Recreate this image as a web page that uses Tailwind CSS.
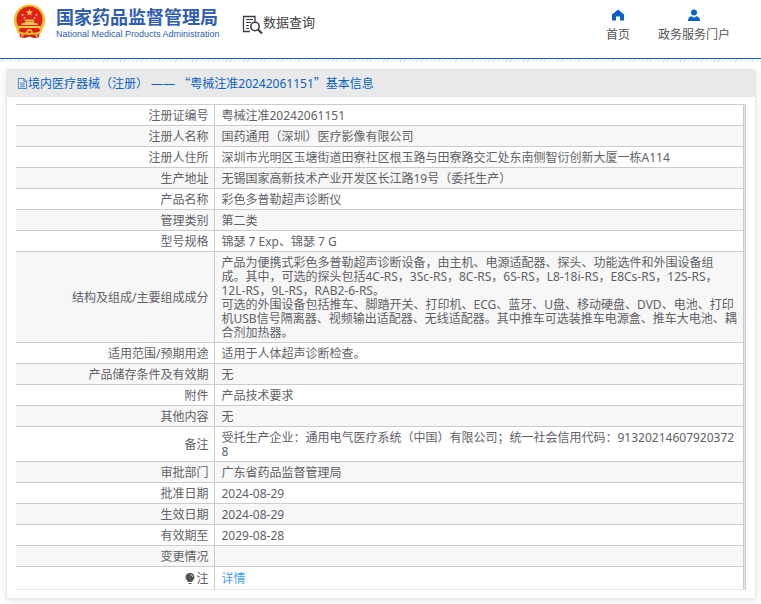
<!DOCTYPE html>
<html lang="zh-CN">
<head>
  <title>国家药品监督管理局 数据查询</title>
  <meta charset="utf-8" />
  <meta name="viewport" content="width=device-width, initial-scale=1" />
  <script src="https://cdn.jsdelivr.net/npm/@tailwindcss/browser@4"></script>
</head>
<body class="bg-white min-h-screen font-['Noto_Sans','Noto_Sans_CJK_SC',sans-serif] text-xs leading-[14px] text-[#606266]">
<header>
  <div class="h-[58px] flex items-start justify-between pl-3 pr-[31px]">
    <div class="flex items-start">
      <a href="#" class="flex items-start gap-[9px] pt-1 text-[#2f5db3]">
        <svg class="w-[35px] h-[35px]" viewBox="0 0 35 35">
          <circle cx="17.5" cy="16" r="15.6" fill="#f0bd2c" />
          <path d="M7 25 L28 25 L27 33 Q22 35 17.5 32.500 Q13 35 8 33 Z" fill="#d42019" />
          <circle cx="17.500" cy="15.500" r="13" fill="#e0201b" />
          <path d="M17.500 5 l1 2.300 2.500 .2 -1.900 1.600 .6 2.400 -2.200 -1.300 -2.200 1.300 .6 -2.400 -1.900 -1.600 2.500 -.2z" fill="#f8c848" />
          <g fill="#f8c848">
            <circle cx="10.500" cy="11" r="1" /><circle cx="12.500" cy="14" r="1" />
            <circle cx="22.500" cy="14" r="1" /><circle cx="24.500" cy="11" r="1" />
            <path d="M12 17 L14 15.500 H21 L23 17 Z" />
            <path d="M13 17.500 H22 V19 H25 L26 21 H9 L10 19 H13 Z" />
            <path d="M6 22 H29 L27.500 24 H7.500 Z" />
          </g>
          <path d="M4 24 Q9 31 17.500 27.500 Q26 31 31 24 L29 29 Q23 32 17.500 30 Q12 32 6 29 Z" fill="#f0bd2c" />
          <circle cx="17.500" cy="28" r="3" fill="#f0bd2c" />
          <circle cx="17.500" cy="28" r="1.300" fill="#d42019" />
          <path d="M9 30 L12 31 L10 34 Z M26 30 L23 31 L25 34 Z" fill="#f0bd2c" />
        </svg>
        <span class="block w-[162px] pt-1">
          <span class="block text-lg leading-[18px] font-bold">国家药品监督管理局</span>
          <span class="block mt-[2px] text-[9px] leading-[12px] font-['Liberation_Sans',sans-serif] whitespace-nowrap">National Medical Products Administration</span>
        </span>
      </a>
      <a href="#" class="flex items-center ml-6 pt-3 text-[#444]">
        <svg class="w-[21px] h-[21px]" viewBox="0 0 21 21" fill="none" stroke="#3c3c46">
          <path d="M8 17.500 H1.500 V2.500 H13 V8" stroke-width="1.300" />
          <path d="M4 5.500 H11 M4 8.500 H9 M4 11.500 H7 M4 14.500 H7" stroke-width="1" />
          <circle cx="13" cy="12.500" r="4.200" stroke-width="1.600" />
          <path d="M16 15.500 L20 19.500" stroke-width="2.200" />
        </svg>
        <span class="text-[13px] leading-5 pb-1">数据查询</span>
      </a>
    </div>
    <nav class="flex gap-7 pt-[9px] text-[#555]">
      <a href="#" class="flex flex-col items-center gap-[6px]">
        <svg class="w-3 h-3" viewBox="0 0 12 12" fill="#0a62c4"><path d="M6 0.500 L12 5.500 V11.500 H8 V7.500 H4 V11.500 H0 V5.500 Z" /></svg>
        <span class="leading-4">首页</span>
      </a>
      <a href="#" class="flex flex-col items-center gap-[6px]">
        <svg class="w-3 h-3" viewBox="0 0 12 12" fill="#0a62c4"><circle cx="6" cy="3.500" r="3" /><path d="M0 12 Q0 8 3.500 7.200 L6 8.800 L8.500 7.200 Q12 8 12 12 Z" /></svg>
        <span class="leading-4">政务服务门户</span>
      </a>
    </nav>
  </div>
  <div class="h-px bg-[#0a62c4]"></div>
  <div class="h-[3px] bg-[repeating-linear-gradient(135deg,#ffffff_0px,#ffffff_2px,#e2e2e2_2px,#e2e2e2_3px)]"></div>
</header>

<main class="mt-[7px] ml-[6px] mr-[5px] mb-[6px] bg-white border border-[#e8e8e8] shadow-[0_2px_8px_rgba(0,0,0,0.1)]">
  <h1 class="h-[27px] flex items-center pl-[10px] bg-[#e9e9e9] border-b border-[#e4e9f4] text-[#0a62c4] whitespace-pre">
    <svg class="w-[11px] h-[11px]" viewBox="0 0 12 12" fill="none" stroke="#0a62c4"><path d="M1.500 0.500 H7.500 L10.500 3.500 V11.500 H1.500 Z M7.500 0.500 V3.500 H10.500 M3.500 5.500 H8.500 M3.500 7.500 H8.500 M3.500 9.500 H8.500" stroke-width="0.800" /></svg><span>境内医疗器械（注册） —— <span class="font-['Noto_Sans_CJK_SC',sans-serif]">“</span>粤械注准20242061151<span class="font-['Noto_Sans_CJK_SC',sans-serif]">”</span>基本信息</span>
  </h1>
  <div class="mt-[7px] mx-[9px] mb-2 border-r border-[#c8c8cc] bg-[#e9e9f2] pr-px">
    <table class="w-full border-collapse bg-white border-t border-r border-[#ccc] border-b border-b-[#e8e8e8] [&_th]:w-[198px] [&_th]:pt-1 [&_th]:pb-[2px] [&_th]:pr-[5px] [&_th]:text-right [&_th]:font-normal [&_th]:border-r [&_th]:border-[#ccc] [&_td]:pt-1 [&_td]:pb-[2px] [&_td]:pl-[7px] [&_td]:pr-[5px] [&_td]:break-all [&_tr]:border-b [&_tr]:border-[#ccc] [&_tr:last-child]:border-[#e8e8e8] [&_tr:nth-child(even)]:bg-[#f7f7f7]">
      <tbody>
        <tr><th scope="row">注册证编号</th><td>粤械注准20242061151</td></tr>
        <tr><th scope="row">注册人名称</th><td>国药通用（深圳）医疗影像有限公司</td></tr>
        <tr><th scope="row">注册人住所</th><td>深圳市光明区玉塘街道田寮社区根玉路与田寮路交汇处东南侧智衍创新大厦一栋A114</td></tr>
        <tr><th scope="row">生产地址</th><td>无锡国家高新技术产业开发区长江路19号（委托生产）</td></tr>
        <tr><th scope="row">产品名称</th><td>彩色多普勒超声诊断仪</td></tr>
        <tr><th scope="row">管理类别</th><td>第二类</td></tr>
        <tr><th scope="row">型号规格</th><td>锦瑟 7 Exp、锦瑟 7 G</td></tr>
        <tr>
          <th scope="row">结构及组成/主要组成成分</th>
          <td>产品为便携式彩色多普勒超声诊断设备，由主机、电源适配器、探头、功能选件和外围设备组<br>成。其中，可选的探头包括4C-RS，3Sc-RS，8C-RS，6S-RS，L8-18i-RS，E8Cs-RS，12S-RS，<br>12L-RS，9L-RS，RAB2-6-RS。<br>可选的外围设备包括推车、脚踏开关、打印机、ECG、蓝牙、U盘、移动硬盘、DVD、电池、打印<br>机USB信号隔离器、视频输出适配器、无线适配器。其中推车可选装推车电源盒、推车大电池、耦<br>合剂加热器。</td>
        </tr>
        <tr><th scope="row">适用范围/预期用途</th><td>适用于人体超声诊断检查。</td></tr>
        <tr><th scope="row">产品储存条件及有效期</th><td>无</td></tr>
        <tr><th scope="row">附件</th><td>产品技术要求</td></tr>
        <tr><th scope="row">其他内容</th><td>无</td></tr>
        <tr><th scope="row">备注</th><td>受托生产企业：通用电气医疗系统（中国）有限公司；统一社会信用代码：913202146079203728</td></tr>
        <tr><th scope="row">审批部门</th><td>广东省药品监督管理局</td></tr>
        <tr><th scope="row">批准日期</th><td>2024-08-29</td></tr>
        <tr><th scope="row">生效日期</th><td>2024-08-29</td></tr>
        <tr><th scope="row">有效期至</th><td>2029-08-28</td></tr>
        <tr><th scope="row">变更情况</th><td></td></tr>
        <tr class="h-[23px]">
          <th scope="row">
            <span class="flex items-center justify-end gap-px">
              <svg class="w-[10px] h-3" viewBox="0 0 10 12" fill="#555"><path d="M5 0 C2 0 0.500 2 0.500 4.300 C0.500 6.500 2.500 7.500 3 9 H7 C7.500 7.500 9.500 6.500 9.500 4.300 C9.500 2 8 0 5 0 Z" /><path d="M3.500 10 H6.500 V11 H3.500 Z" /><path d="M5.500 1.700 Q7.500 2 8 4" fill="none" stroke="#fff" stroke-width="0.700" /></svg>注
            </span>
          </th>
          <td><a href="#" class="text-[#409eff]">详情</a></td>
        </tr>
      </tbody>
    </table>
  </div>
</main>
</body>
</html>
